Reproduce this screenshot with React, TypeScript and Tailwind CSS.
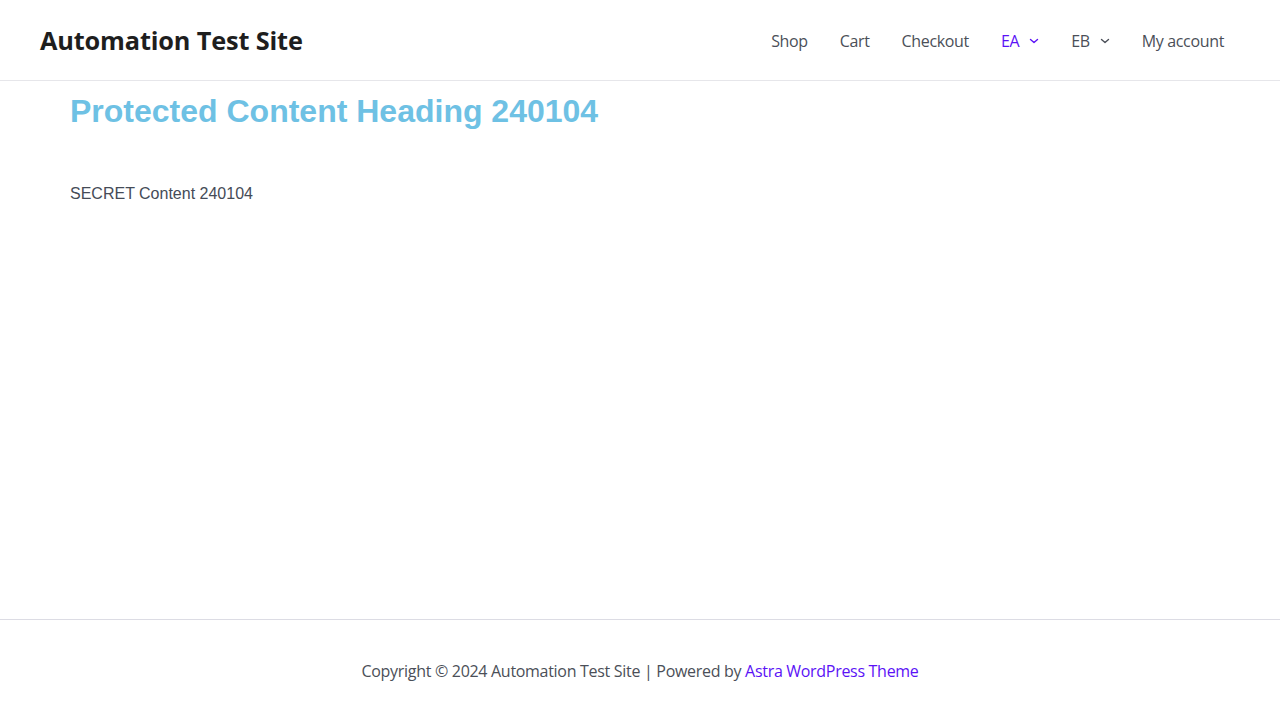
import React from "react";

const Chevron = ({ className = "" }: { className?: string }) => (
  <svg width="10" height="10" viewBox="0 0 10 10" className={className} fill="none" stroke="currentColor" strokeWidth="1.4" strokeLinecap="round" strokeLinejoin="round">
    <path d="M1.5 3.5 L5 6.5 L8.5 3.5" />
  </svg>
);

export default function App() {
  const ubuntu = { fontFamily: '"Open Sans", "Noto Sans", sans-serif' };
  return (
    <div className="min-h-screen flex flex-col bg-white" style={ubuntu}>
      <header className="h-[81px] border-b border-[#e6e6ea] flex items-center justify-between px-10 pt-[1px]">
        <div className="text-[25.3px] font-bold text-[#1e1e1e] tracking-[-0.15px]">Automation Test Site</div>
        <nav className="flex items-center text-[16px] text-[#4b4f58] tracking-[-0.35px] pt-[1px]">
          <a className="px-4">Shop</a>
          <a className="px-4">Cart</a>
          <a className="px-4">Checkout</a>
          <a className="px-4 flex items-center gap-[10px] text-[#5b12f6]">EA<Chevron /></a>
          <a className="px-4 flex items-center gap-[10px]">EB<Chevron /></a>
          <a className="px-4">My account</a>
        </nav>
      </header>
      <main className="flex-1 px-[70px] pt-[12px]" style={{ fontFamily: '"Liberation Sans", Arial, sans-serif' }}>
        <h1 className="text-[32px] font-bold text-[#6ec1e4] leading-[36px]">Protected Content Heading 240104</h1>
        <p className="mt-[53px] text-[16px] text-[#454b57]">SECRET Content 240104</p>
      </main>
      <footer className="h-[101px] border-t border-[#dcdce4] flex items-center justify-center text-[16px] text-[#4b4f58] tracking-[-0.3px] pt-[2px]">
        <span>Copyright © 2024 Automation Test Site | Powered by <a className="text-[#5b12f6]">Astra WordPress Theme</a></span>
      </footer>
    </div>
  );
}
